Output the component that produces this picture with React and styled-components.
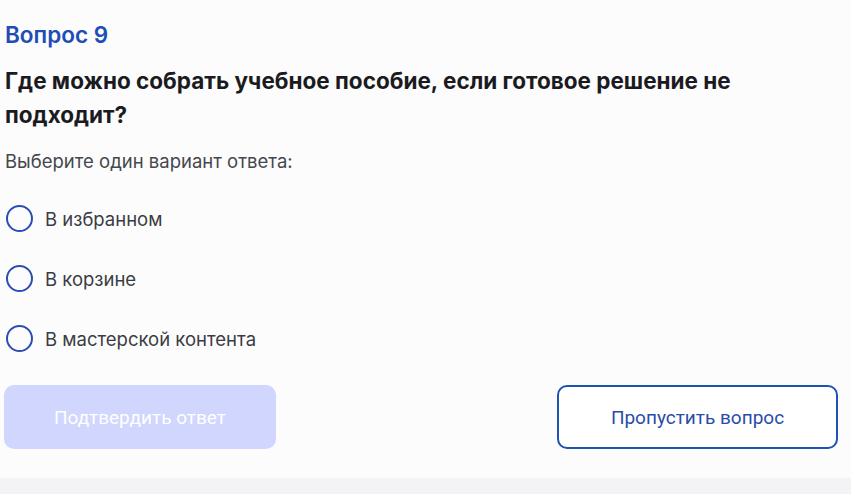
import styled, { createGlobalStyle } from 'styled-components';
import { useState } from 'react';

const answers = ['В избранном', 'В корзине', 'В мастерской контента'];

export default function App() {
  const [picked, setPicked] = useState(null);

  return (
    <>
      <GlobalStyle />
      <Page>
        <Quiz>
          <QuestionNumber>Вопрос 9</QuestionNumber>
          <QuestionText>
            Где можно собрать учебное пособие, если готовое решение не подходит?
          </QuestionText>
          <Hint>Выберите один вариант ответа:</Hint>
          <Options>
            {answers.map((answer, i) => (
              <Option key={answer} onClick={() => setPicked(i)}>
                <Radio $checked={picked === i} />
                <OptionLabel>{answer}</OptionLabel>
              </Option>
            ))}
          </Options>
          <Actions>
            <ConfirmButton disabled={picked === null}>Подтвердить ответ</ConfirmButton>
            <SkipButton>Пропустить вопрос</SkipButton>
          </Actions>
        </Quiz>
        <Footer />
      </Page>
    </>
  );
}

const GlobalStyle = createGlobalStyle`
  body {
    margin: 0;
    background: #fcfcfd;
    font-family: Inter, "Noto Sans", sans-serif;
  }
`;

const Page = styled.div`
  display: flex;
  flex-direction: column;
  min-height: 100vh;
`;

const Quiz = styled.div`
  padding: 20px 13px 0 4px;
  display: flex;
  flex-direction: column;
`;

const QuestionNumber = styled.h3`
  margin: 0;
  font-size: 22.5px;
  line-height: 30px;
  font-weight: 600;
  color: #1d4db5;
  padding-left: 1px;
`;

const QuestionText = styled.h2`
  margin: 14px 0 0;
  max-width: 800px;
  font-size: 22.5px;
  line-height: 34px;
  font-weight: 700;
  color: #1b1b1f;
  padding-left: 1px;
`;

const Hint = styled.p`
  margin: 17px 0 0;
  font-size: 18.5px;
  line-height: 24px;
  color: #45474d;
  padding-left: 1px;
`;

const Options = styled.div`
  margin-top: 32px;
  display: flex;
  flex-direction: column;
  gap: 33px;
`;

const Option = styled.label`
  display: flex;
  align-items: center;
  gap: 12px;
  cursor: pointer;
  padding-left: 2px;
`;

const Radio = styled.span`
  box-sizing: border-box;
  width: 27px;
  height: 27px;
  border-radius: 50%;
  border: 2.5px solid #2b4db3;
  flex-shrink: 0;
  background: ${(p) => (p.$checked ? 'radial-gradient(#2b4db3 40%, transparent 45%)' : 'transparent')};
`;

const OptionLabel = styled.span`
  font-size: 18.5px;
  line-height: 24px;
  color: #3a3c42;
`;

const Actions = styled.div`
  margin-top: 33px;
  display: flex;
  justify-content: space-between;
`;

const BaseButton = styled.button`
  height: 64px;
  border-radius: 10px;
  font-family: Roboto, Inter, sans-serif;
  font-size: 19px;
  cursor: pointer;
`;

const ConfirmButton = styled(BaseButton)`
  width: 272px;
  border: none;
  background: #d0d6fe;
  color: #ffffff;
`;

const SkipButton = styled(BaseButton)`
  width: 281px;
  border: 2px solid #2051b4;
  background: #ffffff;
  color: #2a4ca8;
`;

const Footer = styled.div`
  margin-top: auto;
  height: 16px;
  background: #f3f3f5;
`;
